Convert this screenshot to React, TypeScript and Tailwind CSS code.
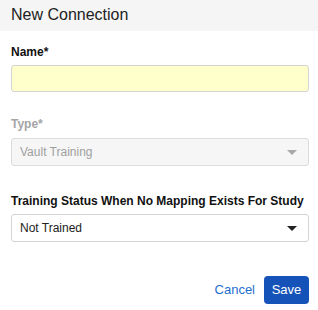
export default function App() {
  return (
    <div className="w-[318px] h-[310px] bg-white font-['Liberation_Sans',Arial,sans-serif] text-[#222]">
      <div className="h-[31px] bg-[#f5f5f5] px-[11px] pt-[5px]">
        <h1 className="text-[16px] leading-[19px] text-[#222]">New Connection</h1>
      </div>

      <div className="pl-[11px] pr-[9px]">
        <label className="block mt-[14px] text-[12px] leading-[14px] font-bold text-[#111]">Name*</label>
        <input
          type="text"
          className="mt-[6px] block w-full h-[27px] rounded-[3px] border border-[#d4d4d4] bg-[#ffffcc] px-2 text-[12px] outline-none"
        />

        <label className="block mt-[25px] text-[12px] leading-[14px] font-bold text-[#a5a5a5]">Type*</label>
        <div className="mt-[7px] flex items-center justify-between w-full h-[28px] rounded-[3px] border border-[#dcdcdc] bg-[#f6f6f6] pl-[8px] pr-[11px]">
          <span className="text-[12px] text-[#a0a0a0]">Vault Training</span>
          <svg width="10" height="5" viewBox="0 0 10 5">
            <path d="M0 0 L10 0 L5 5 Z" fill="#a8a8a8" />
          </svg>
        </div>

        <label className="block mt-[28px] whitespace-nowrap text-[12px] leading-[14px] font-bold text-[#111]">
          Training Status When No Mapping Exists For Study
        </label>
        <div className="mt-[6px] flex items-center justify-between w-full h-[28px] rounded-[3px] border border-[#d4d4d4] bg-white pl-[8px] pr-[11px]">
          <span className="text-[12px] text-[#222]">Not Trained</span>
          <svg width="10" height="5" viewBox="0 0 10 5">
            <path d="M0 0 L10 0 L5 5 Z" fill="#222" />
          </svg>
        </div>

        <div className="mt-[34px] flex items-center justify-end gap-[9px]">
          <button className="text-[13px] text-[#1f6fcf]">Cancel</button>
          <button className="w-[45px] h-[28px] rounded-[4px] bg-[#1553b9] text-[13px] text-white">Save</button>
        </div>
      </div>
    </div>
  );
}
